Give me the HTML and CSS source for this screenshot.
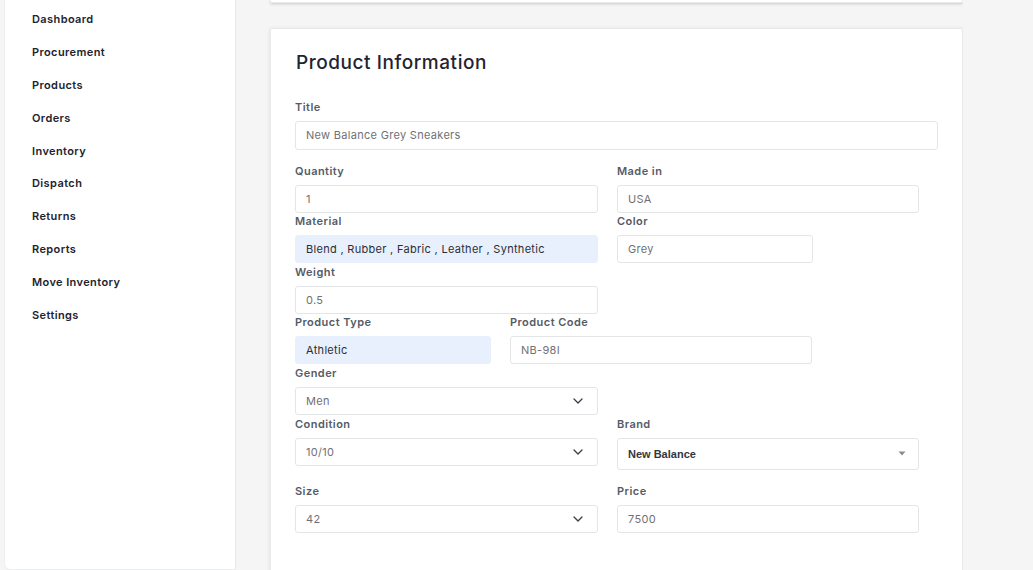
FILE: index.html
```html
<!DOCTYPE html>
<html lang="en">
<head>
<meta charset="utf-8">
<title>Product Information</title>
<link rel="stylesheet" href="styles.css">
</head>
<body>
<div class="layout">
  <aside class="sidebar">
    <nav class="nav">
      <a class="nav-item">Dashboard</a>
      <a class="nav-item">Procurement</a>
      <a class="nav-item">Products</a>
      <a class="nav-item">Orders</a>
      <a class="nav-item">Inventory</a>
      <a class="nav-item">Dispatch</a>
      <a class="nav-item">Returns</a>
      <a class="nav-item">Reports</a>
      <a class="nav-item">Move Inventory</a>
      <a class="nav-item">Settings</a>
    </nav>
  </aside>
  <main class="main">
    <div class="card card-top"></div>
    <section class="card card-form">
      <h2 class="card-title">Product Information</h2>

      <div class="row row-first">
        <div class="field w-full">
          <label class="label">Title</label>
          <div class="input">New Balance Grey Sneakers</div>
        </div>
      </div>

      <div class="row">
        <div class="field w-half">
          <label class="label">Quantity</label>
          <div class="input">1</div>
        </div>
        <div class="field w-right">
          <label class="label">Made in</label>
          <div class="input">USA</div>
        </div>
      </div>

      <div class="row">
        <div class="field w-half">
          <label class="label">Material</label>
          <div class="input input-filled">Blend , Rubber , Fabric , Leather , Synthetic</div>
        </div>
        <div class="field w-third">
          <label class="label">Color</label>
          <div class="input">Grey</div>
        </div>
      </div>

      <div class="row">
        <div class="field w-half">
          <label class="label">Weight</label>
          <div class="input">0.5</div>
        </div>
      </div>

      <div class="row">
        <div class="field w-third">
          <label class="label">Product Type</label>
          <div class="input input-filled">Athletic</div>
        </div>
        <div class="field w-right">
          <label class="label">Product Code</label>
          <div class="input">NB-98I</div>
        </div>
      </div>

      <div class="row">
        <div class="field w-half">
          <label class="label">Gender</label>
          <div class="input select">Men
            <svg class="chev" width="10" height="6" viewBox="0 0 10 6"><path d="M1 1 L5 5 L9 1" fill="none" stroke="#3a3d42" stroke-width="1.3" stroke-linecap="round" stroke-linejoin="round"/></svg>
          </div>
        </div>
      </div>

      <div class="row row-brand">
        <div class="field w-half">
          <label class="label">Condition</label>
          <div class="input select">10/10
            <svg class="chev" width="10" height="6" viewBox="0 0 10 6"><path d="M1 1 L5 5 L9 1" fill="none" stroke="#3a3d42" stroke-width="1.3" stroke-linecap="round" stroke-linejoin="round"/></svg>
          </div>
        </div>
        <div class="field w-right">
          <label class="label">Brand</label>
          <div class="brand-select">
            <span class="brand-value">New Balance</span>
            <svg class="caret" width="8" height="5" viewBox="0 0 8 5"><path d="M0.5 0.5 L7.5 0.5 L4 4.5 Z" fill="#8a8c90"/></svg>
          </div>
        </div>
      </div>

      <div class="row">
        <div class="field w-half">
          <label class="label">Size</label>
          <div class="input select">42
            <svg class="chev" width="10" height="6" viewBox="0 0 10 6"><path d="M1 1 L5 5 L9 1" fill="none" stroke="#3a3d42" stroke-width="1.3" stroke-linecap="round" stroke-linejoin="round"/></svg>
          </div>
        </div>
        <div class="field w-right">
          <label class="label">Price</label>
          <div class="input">7500</div>
        </div>
      </div>
    </section>
  </main>
</div>
</body>
</html>
```
FILE: styles.css
```css
* { box-sizing: border-box; }

html, body {
  margin: 0;
  padding: 0;
}

body {
  background: #f5f5f5;
  font-family: "Inter", "Open Sans", sans-serif;
  color: #1f2430;
  width: 1033px;
  height: 570px;
  overflow: hidden;
}

.layout {
  display: flex;
  height: 570px;
  overflow: hidden;
}

.sidebar {
  margin-left: 4px;
  width: 232px;
  height: 570px;
  background: #ffffff;
  border-right: 1px solid #e7e9ec;
  border-left: 1px solid #eceef0;
  border-bottom: 1px solid #eceef0;
  border-radius: 0 0 0 6px;
  flex-shrink: 0;
}

.nav {
  display: flex;
  flex-direction: column;
  padding: 3px 0 0 27px;
}

.nav-item {
  height: 32.9px;
  line-height: 32px;
  font-size: 11px;
  font-weight: 600;
  color: #1d2330;
  letter-spacing: 0.4px;
}

.main {
  padding-left: 34px;
  height: 570px;
  overflow: hidden;
  display: flex;
  flex-direction: column;
  gap: 25px;
}

.card {
  width: 693px;
  background: #ffffff;
  border: 1px solid #e6e8ea;
  box-shadow: 0 1px 4px rgba(0, 0, 0, 0.10);
  border-radius: 2px;
  flex-shrink: 0;
}

.card-top {
  height: 3px;
  border-top: none;
  box-shadow: 0 1px 3px rgba(0, 0, 0, 0.18);
}

.card-form {
  height: 560px;
  padding: 23px 24px 0 24px;
  display: flex;
  flex-direction: column;
  gap: 1.6px;
}

.card-title {
  margin: 0 0 24px 1px;
  font-size: 19px;
  line-height: 22px;
  font-weight: 500;
  color: #1f2430;
  letter-spacing: 0.55px;
}

.row {
  display: flex;
  gap: 19px;
}

.row-first {
  margin-bottom: 12.5px;
}

.row-brand {
  margin-bottom: 12.5px;
}

.field {
  display: flex;
  flex-direction: column;
}

.w-full { width: 643px; }
.w-half { width: 303px; }
.w-right { width: 302px; }
.w-third { width: 196px; }

.label {
  font-size: 11px;
  line-height: 14px;
  font-weight: 600;
  color: #555b66;
  margin-bottom: 7px;
  letter-spacing: 0.45px;
}

.input {
  height: 28px;
  border: 1px solid #e3e6e8;
  border-radius: 3px;
  padding: 0 10px;
  display: flex;
  align-items: center;
  font-size: 11px;
  color: #6f7175;
  background: #ffffff;
  letter-spacing: 0.3px;
}

.row-first .input { height: 29px; }

.input-filled {
  background: #e8f0fe;
  color: #2a2e36;
  border-color: #e8f0fe;
}

.select {
  justify-content: space-between;
  padding-right: 14px;
}

.chev {
  display: block;
}

.brand-select {
  height: 32px;
  border: 1px solid #e3e6e8;
  border-radius: 3px;
  padding: 0 12px 0 10px;
  display: flex;
  align-items: center;
  justify-content: space-between;
  background: #ffffff;
}

.brand-value {
  font-family: "Liberation Sans", Arial, sans-serif;
  font-weight: 700;
  font-size: 11px;
  color: #333740;
}

.caret { display: block; }
```
